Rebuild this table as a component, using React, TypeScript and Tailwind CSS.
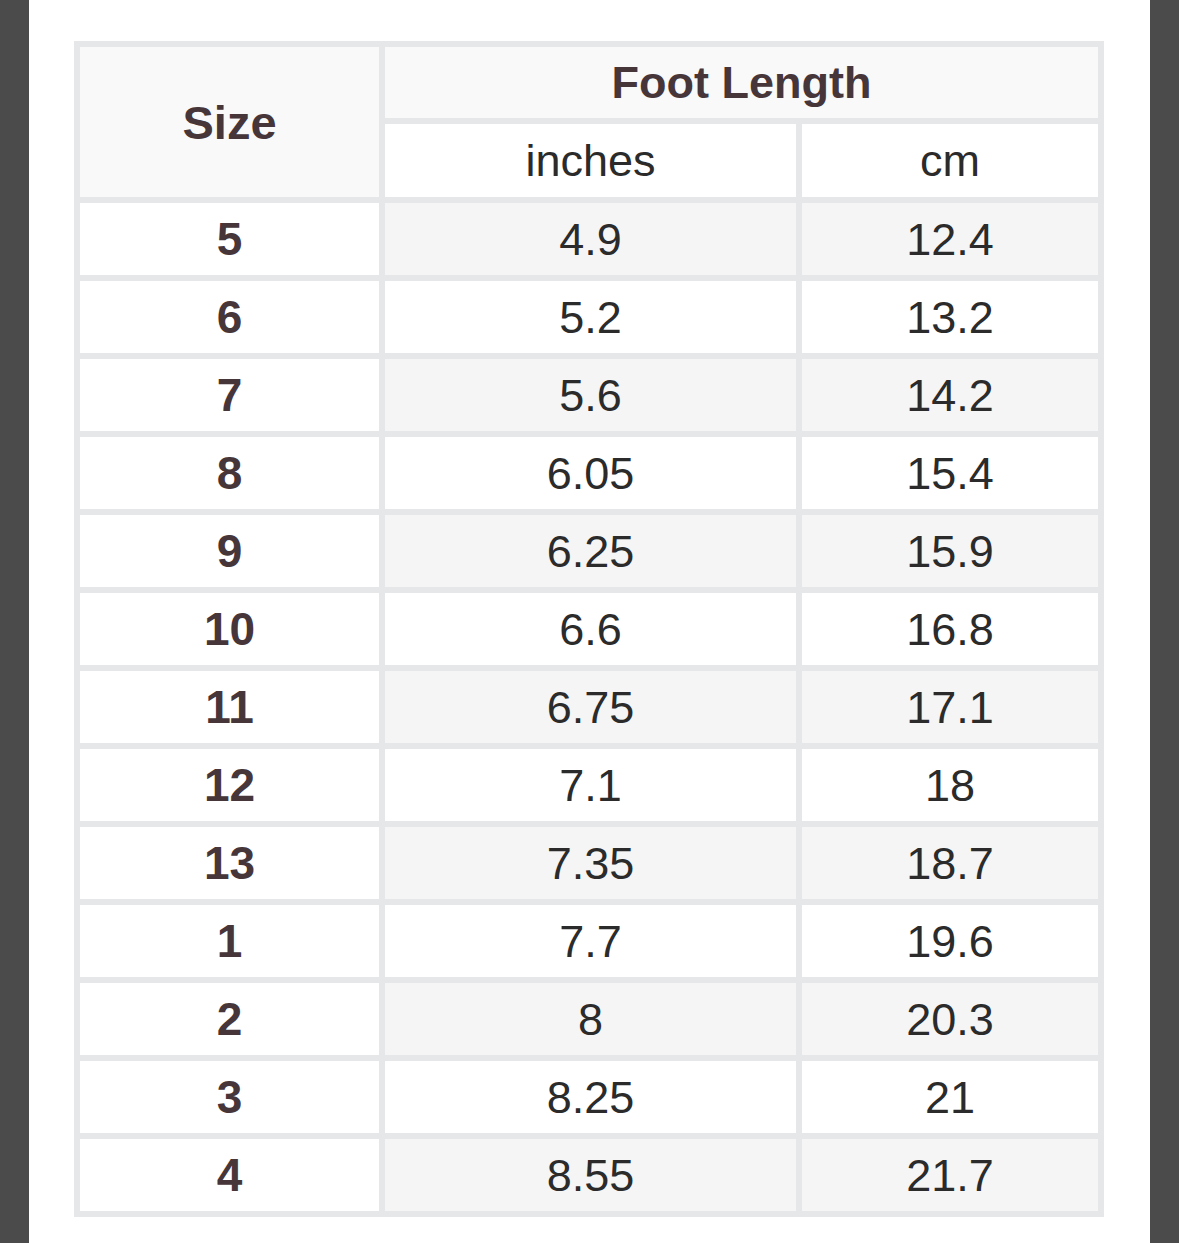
const rows: [string, string, string][] = [
  ['5', '4.9', '12.4'],
  ['6', '5.2', '13.2'],
  ['7', '5.6', '14.2'],
  ['8', '6.05', '15.4'],
  ['9', '6.25', '15.9'],
  ['10', '6.6', '16.8'],
  ['11', '6.75', '17.1'],
  ['12', '7.1', '18'],
  ['13', '7.35', '18.7'],
  ['1', '7.7', '19.6'],
  ['2', '8', '20.3'],
  ['3', '8.25', '21'],
  ['4', '8.55', '21.7'],
]

export default function App() {
  return (
    <div className="flex min-h-[1243px] w-[1179px] bg-[#4b4b4b] font-['Liberation_Sans',Arial,sans-serif]">
      <div className="ml-[29px] w-[1121px] bg-white pl-[45px] pt-[41px]">
        <div className="grid w-[1030px] grid-cols-[299px_411px_296px] grid-rows-[71px_73px_repeat(13,72px)] gap-[6px] bg-[#e6e7e9] p-[6px] text-[45px] leading-none">
          <div className="row-span-2 flex items-center justify-center bg-[#f9f9f9] text-[47px] font-bold text-[#46363a]">Size</div>
          <div className="col-span-2 flex items-center justify-center bg-[#f9f9f9] text-[45px] font-bold text-[#46363a]">Foot Length</div>
          <div className="flex items-center justify-center bg-white text-[#2b2b2b]">inches</div>
          <div className="flex items-center justify-center bg-white text-[#2b2b2b]">cm</div>
          {rows.map(([size, inches, cm], i) => {
            const stripe = i % 2 === 0 ? 'bg-[#f5f5f5]' : 'bg-white'
            return [
              <div key={size + 'a'} className="flex items-center justify-center bg-white text-[46px] font-bold text-[#46363a]">{size}</div>,
              <div key={size + 'b'} className={`flex items-center justify-center text-[#2b2b2b] ${stripe}`}>{inches}</div>,
              <div key={size + 'c'} className={`flex items-center justify-center text-[#2b2b2b] ${stripe}`}>{cm}</div>,
            ]
          })}
        </div>
      </div>
    </div>
  )
}
